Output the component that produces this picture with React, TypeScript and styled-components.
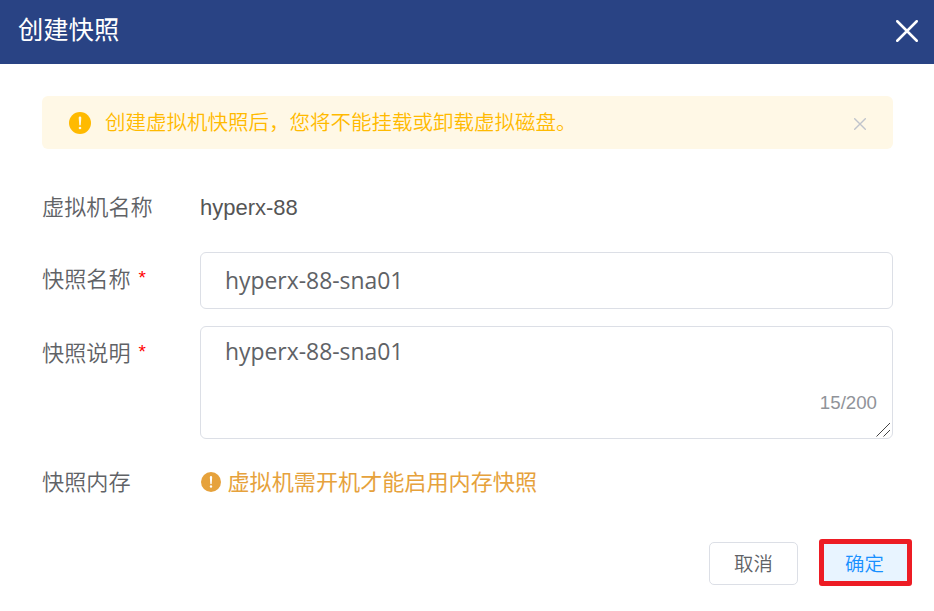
import React, { useState } from "react";
import styled, { createGlobalStyle } from "styled-components";

const GlobalStyle = createGlobalStyle`
  *, *::before, *::after { box-sizing: border-box; }
  body {
    margin: 0;
    background: #fff;
    color: #606266;
    font-family: "Liberation Sans", "Noto Sans CJK SC", sans-serif;
  }
`;

const Dialog = styled.section`
  width: 934px;
  height: 611px;
  background: #fff;
  overflow: hidden;
`;

const Header = styled.header`
  height: 64px;
  padding: 0 16px 4px 18px;
  display: flex;
  align-items: center;
  justify-content: space-between;
  background: #294384;
  color: #fff;
`;

const Title = styled.h1`
  margin: 0;
  font-size: 25.3px;
  line-height: 36px;
  font-weight: 400;
`;

const IconButton = styled.button`
  display: flex;
  padding: 0;
  border: 0;
  background: none;
  color: inherit;
`;

const HeaderClose = styled(IconButton)`
  margin-top: 2px;
`;

const Body = styled.div`
  padding: 32px 41px 0 42px;
`;

const Alert = styled.div`
  height: 53px;
  padding: 0 27px;
  display: flex;
  align-items: center;
  border-radius: 6px;
  background: #fff8e6;
  color: #ffba00;
`;

const AlertText = styled.span`
  flex: 1;
  margin-left: 14px;
  font-size: 20.5px;
  font-weight: 350;
  line-height: 30px;
  white-space: nowrap;
`;

const AlertClose = styled(IconButton)`
  margin-top: 2px;
  color: #c0c4cc;
`;

const Row = styled.div<{ $height: number; $gap: number }>`
  display: grid;
  grid-template-columns: 158px 1fr;
  height: ${(p) => p.$height}px;
  margin-top: ${(p) => p.$gap}px;
`;

const Label = styled.label<{ $line: number }>`
  display: flex;
  height: ${(p) => p.$line}px;
  font-size: 22.15px;
  font-weight: 350;
  line-height: ${(p) => p.$line}px;
  white-space: nowrap;
`;

const Required = styled.span`
  margin: -2px 0 0 8px;
  font-size: 19px;
  font-weight: 400;
  color: #f00;
`;

const Value = styled.span`
  font-size: 22px;
  line-height: 42px;
  color: #555;
`;

const Hint = styled.span`
  display: flex;
  align-items: center;
  gap: 6.5px;
  padding-left: 1px;
  font-size: 22.12px;
  line-height: 40px;
  color: #e6a23c;
  white-space: nowrap;

  svg {
    margin-bottom: 2px;
  }
`;

const Input = styled.input`
  width: 100%;
  height: 57px;
  padding: 0 24px;
  border: 1px solid #dcdfe6;
  border-radius: 6px;
  outline: 0;
  background: #fff;
  color: #606266;
  font: 400 22.9px/32px "Open Sans", "Noto Sans", sans-serif;
`;

const TextareaFrame = styled.div`
  position: relative;
  height: 113px;
`;

const Textarea = styled.textarea`
  display: block;
  width: 100%;
  height: 113px;
  padding: 9px 24px;
  border: 1px solid #dcdfe6;
  border-radius: 6px;
  outline: 0;
  resize: none;
  background: #fff;
  color: #606266;
  font: 400 22.9px/32px "Open Sans", "Noto Sans", sans-serif;
`;

const Counter = styled.span`
  position: absolute;
  right: 16px;
  bottom: 24px;
  font-size: 18.7px;
  line-height: 24px;
  color: #909399;
`;

const Grip = styled.svg`
  position: absolute;
  right: 2px;
  bottom: 2px;
`;

const Footer = styled.footer`
  display: flex;
  justify-content: flex-end;
  align-items: center;
  gap: 21px;
  padding-right: 22px;
  margin-top: 36px;
  height: 47px;
`;

const Button = styled.button<{ $primary?: boolean }>`
  width: ${(p) => (p.$primary ? 93 : 89)}px;
  height: ${(p) => (p.$primary ? 47 : 43)}px;
  margin-top: ${(p) => (p.$primary ? 0 : 2)}px;
  padding: ${(p) => (p.$primary ? "2px 2px 0 0" : "1px 0 0")};
  border: ${(p) => (p.$primary ? "5px solid #ed1c24" : "1px solid #dcdfe6")};
  border-radius: ${(p) => (p.$primary ? 3 : 5)}px;
  background: ${(p) => (p.$primary ? "#e8f4ff" : "#fff")};
  color: ${(p) => (p.$primary ? "#1890ff" : "#606266")};
  font: 350 19.4px/28px "Liberation Sans", "Noto Sans CJK SC", sans-serif;
`;

function Cross({ size, width }: { size: number; width: number }) {
  const far = size - width / 2;
  const near = width / 2;
  return (
    <svg width={size} height={size} viewBox={`0 0 ${size} ${size}`}>
      <path
        d={`M${near} ${near}L${far} ${far}M${far} ${near}L${near} ${far}`}
        stroke="currentColor"
        strokeWidth={width}
        strokeLinecap="round"
      />
    </svg>
  );
}

function Warning({ size, mark }: { size: number; mark: string }) {
  return (
    <svg width={size} height={size} viewBox="0 0 22 22">
      <circle cx="11" cy="11" r="11" fill="currentColor" />
      <path d="M9.7 5.8a1.3 1.3 0 0 1 2.6 0l-.5 6.9a.8.8 0 0 1-1.6 0z" fill={mark} />
      <circle cx="11" cy="16" r="1.3" fill={mark} />
    </svg>
  );
}

export default function App() {
  const [name, setName] = useState("hyperx-88-sna01");
  const [description, setDescription] = useState("hyperx-88-sna01");

  return (
    <>
      <GlobalStyle />
      <Dialog>
        <Header>
          <Title>创建快照</Title>
          <HeaderClose>
            <Cross size={22} width={2.5} />
          </HeaderClose>
        </Header>
        <Body>
          <Alert>
            <Warning size={22} mark="#fff8e6" />
            <AlertText>创建虚拟机快照后，您将不能挂载或卸载虚拟磁盘。</AlertText>
            <AlertClose>
              <Cross size={12} width={1.4} />
            </AlertClose>
          </Alert>
          <Row $height={40} $gap={38}>
            <Label $line={42}>虚拟机名称</Label>
            <Value>hyperx-88</Value>
          </Row>
          <Row $height={57} $gap={25}>
            <Label $line={55}>
              快照名称<Required>*</Required>
            </Label>
            <Input value={name} onChange={(e) => setName(e.target.value)} />
          </Row>
          <Row $height={113} $gap={17}>
            <Label $line={55}>
              快照说明<Required>*</Required>
            </Label>
            <TextareaFrame>
              <Textarea
                value={description}
                maxLength={200}
                onChange={(e) => setDescription(e.target.value)}
              />
              <Counter>{description.length}/200</Counter>
              <Grip width="15" height="15" viewBox="0 0 15 15">
                <path d="M0.5 14.5L14 1M7.5 14.5L14 8" stroke="#444" strokeWidth="1" />
              </Grip>
            </TextareaFrame>
          </Row>
          <Row $height={40} $gap={24}>
            <Label $line={40}>快照内存</Label>
            <Hint>
              <Warning size={20} mark="#fff" />
              虚拟机需开机才能启用内存快照
            </Hint>
          </Row>
        </Body>
        <Footer>
          <Button>取消</Button>
          <Button $primary>确定</Button>
        </Footer>
      </Dialog>
    </>
  );
}
